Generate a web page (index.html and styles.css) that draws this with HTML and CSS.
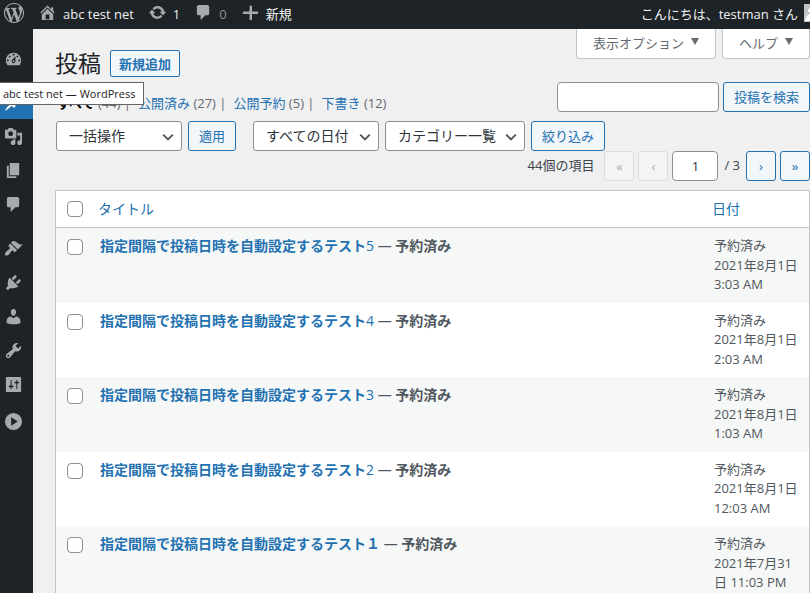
FILE: index.html
```html
<!DOCTYPE html>
<html lang="ja">
<head>
  <meta charset="UTF-8" />
  <meta name="viewport" content="width=device-width, initial-scale=1.0" />
  <title>投稿 ‹ abc test net — WordPress</title>
  <link rel="stylesheet" href="styles.css">
</head>
<body>
  <header class="adminbar">
    <a class="bar-item bar-logo" href="#" aria-label="WordPress">
      <svg class="icon-logo" viewBox="0 0 20 20"><path d="M20 10c0-5.51-4.49-10-10-10C4.48 0 0 4.49 0 10c0 5.52 4.48 10 10 10 5.51 0 10-4.48 10-10zM7.78 15.37L4.37 6.22c.55-.02 1.17-.08 1.17-.08.5-.06.44-1.13-.06-1.11 0 0-1.45.11-2.37.11-.18 0-.37 0-.58-.01C4.12 2.69 6.87 1.11 10 1.11c2.33 0 4.45.87 6.05 2.34-.68-.11-1.65.39-1.65 1.58 0 .74.45 1.36.9 2.1.35.61.55 1.36.55 2.46 0 1.49-1.4 5-1.4 5l-3.03-8.37c.54-.02.82-.17.82-.17.5-.05.44-1.25-.06-1.22 0 0-1.44.12-2.38.12-.87 0-2.33-.12-2.33-.12-.5-.03-.56 1.2-.06 1.22l.92.08 1.26 3.41zM17.41 10c.24-.64.74-1.87.43-4.25.7 1.29 1.05 2.71 1.05 4.25 0 3.29-1.73 6.24-4.4 7.78.97-2.59 1.94-5.2 2.92-7.78zM6.1 18.09C3.12 16.65 1.11 13.53 1.11 10c0-1.3.23-2.48.72-3.59C3.25 10.3 4.67 14.2 6.1 18.09zm4.03-6.63l2.58 6.98c-.86.29-1.76.45-2.71.45-.79 0-1.57-.11-2.29-.33.81-2.38 1.62-4.74 2.42-7.1z"/></svg>
    </a>
    <a class="bar-item" href="#">
      <svg viewBox="0 0 20 20"><path d="M16 8.5l1.53 1.53-1.06 1.06L10 4.6l-6.47 6.49-1.06-1.06L10 2.5l4 4v-2h2v4zm-6-2.46l6 5.99V18H4v-5.97zM12 17v-5H8v5h4z"/></svg>
      abc test net
    </a>
    <a class="bar-item" href="#">
      <svg viewBox="0 0 20 20"><path d="M10.2 3.28c3.53 0 6.43 2.61 6.92 6h2.08l-3.5 4-3.5-4h2.32c-.45-1.97-2.21-3.45-4.32-3.45-1.45 0-2.73.71-3.54 1.78L4.95 5.66C6.23 4.2 8.11 3.28 10.2 3.28zm-.4 13.44c-3.52 0-6.43-2.61-6.92-6H.8l3.5-4c1.17 1.33 2.33 2.67 3.5 4H5.48c.45 1.97 2.21 3.45 4.32 3.45 1.45 0 2.73-.71 3.54-1.78l1.71 1.95c-1.28 1.46-3.15 2.38-5.25 2.38z"/></svg>
      1
    </a>
    <a class="bar-item muted" href="#">
      <svg viewBox="0 0 20 20"><path d="M5 2h9c1.1 0 2 .9 2 2v7c0 1.1-.9 2-2 2h-2l-5 5v-5H5c-1.1 0-2-.9-2-2V4c0-1.1.9-2 2-2z"/></svg>
      0
    </a>
    <a class="bar-item" href="#">
      <svg viewBox="0 0 20 20"><path d="M9 3h2.600v6H18v2.600h-6.400V18H9v-6.400H2V9h7z"/></svg>
      新規
    </a>
    <a class="bar-item bar-user" href="#">
      こんにちは、testman さん
      <svg class="avatar" viewBox="0 0 6 18"><path fill="#c3c4c7" d="M0 0h6v18H0z"/><path fill="#fff" d="M6 4v4H4c0-2 .6-3.200 2-4zM6 9.500V17H1c.3-3.500 2-6 5-7.500z"/></svg>
    </a>
  </header>

  <div class="layout">
    <nav class="menu">
      <a href="#" aria-label="ダッシュボード"><svg viewBox="0 0 20 20"><path fill-rule="evenodd" d="M3.76 17h12.48c1.1-1.37 1.76-3.11 1.76-5 0-4.42-3.58-8-8-8s-8 3.58-8 8c0 1.89.66 3.63 1.76 5zM10 5c.55 0 1 .45 1 1s-.45 1-1 1-1-.45-1-1 .45-1 1-1zM6 7c.55 0 1 .45 1 1s-.45 1-1 1-1-.45-1-1 .45-1 1-1zm8 0c.55 0 1 .45 1 1s-.45 1-1 1-1-.45-1-1 .45-1 1-1zM8.600 11.500L12 7.500v5.500c0 1.100-.9 2-2 2s-2-.9-2-2c0-.57.24-1.100.6-1.500zM4 11c.55 0 1 .45 1 1s-.45 1-1 1-1-.45-1-1 .45-1 1-1zm12 0c.55 0 1 .45 1 1s-.45 1-1 1-1-.45-1-1 .45-1 1-1zm-5 2c0-.55-.45-1-1-1s-1 .45-1 1 .45 1 1 1 1-.45 1-1z"/></svg></a>
      <a class="current group" href="#" aria-label="投稿"><svg viewBox="0 0 20 20"><path d="M10.44 3.02l1.82-1.82 6.36 6.35-1.83 1.82c-1.05-.68-2.48-.57-3.41.36l-.75.75c-.92.93-1.04 2.35-.35 3.41l-1.83 1.82-2.41-2.41-2.8 2.79c-.42.42-3.38 2.71-3.8 2.29s1.86-3.39 2.28-3.81l2.79-2.79L4.1 9.36l1.83-1.82c1.05.69 2.48.57 3.4-.36l.75-.75c.93-.92 1.05-2.35.36-3.41z"/></svg></a>
      <a href="#" aria-label="メディア"><svg viewBox="0 0 20 20"><path fill-rule="evenodd" d="M13 11V4c0-.55-.45-1-1-1h-1.67L9 1H5L3.67 3H2c-.55 0-1 .45-1 1v7c0 .55.45 1 1 1h10c.55 0 1-.45 1-1zM7 4.500c1.38 0 2.500 1.120 2.500 2.500S8.38 9.500 7 9.500 4.500 8.38 4.500 7 5.620 4.500 7 4.500zM14 6h5v10.500c0 1.380-1.120 2.500-2.500 2.500S14 17.880 14 16.500s1.120-2.500 2.500-2.500c.17 0 .34.02.5.05V9h-3V6zm-4 8.050V13h2v3.500c0 1.380-1.120 2.500-2.500 2.500S7 17.880 7 16.500 8.120 14 9.500 14c.17 0 .34.02.5.05z"/></svg></a>
      <a href="#" aria-label="固定ページ"><svg viewBox="0 0 20 20"><path d="M6 15V2h10v13H6zm-1 1h8v2H3V5h2v11z"/></svg></a>
      <a href="#" aria-label="コメント"><svg viewBox="0 0 20 20"><path d="M5 2h9c1.1 0 2 .9 2 2v7c0 1.1-.9 2-2 2h-2l-5 5v-5H5c-1.1 0-2-.9-2-2V4c0-1.1.9-2 2-2z"/></svg></a>
      <a class="group" href="#" aria-label="外観"><svg viewBox="0 0 20 20"><path d="M14.48 11.06L7.41 3.99l1.5-1.5c.5-.56 2.3-.47 3.51.32 1.21.8 1.43 1.28 2.91 2.1 1.18.64 2.45 1.26 4.45.85zm-.71.71L6.7 4.7 4.93 6.47c-.39.39-.39 1.02 0 1.41l1.06 1.06c.39.39.39 1.03 0 1.42-.6.6-1.43 1.11-2.21 1.69-.35.26-.7.53-1.01.84C1.43 14.23.4 16.08 1.4 17.07c.99 1 2.84-.03 4.18-1.36.31-.31.58-.66.85-1.02.57-.78 1.08-1.61 1.69-2.21.39-.39 1.02-.39 1.41 0l1.06 1.06c.39.39 1.02.39 1.41 0z"/></svg></a>
      <a href="#" aria-label="プラグイン"><svg viewBox="0 0 20 20"><path d="M13.11 4.36L9.87 7.6 8 5.73l3.24-3.24c.35-.34 1.05-.2 1.56.32.52.51.66 1.21.31 1.55zm-8 1.77l.91-1.12 9.01 9.01-1.19.84c-.71.71-2.63 1.16-3.82 1.16H6.14L4.9 17.26c-.59.59-1.54.59-2.12 0-.59-.58-.59-1.53 0-2.12l1.24-1.24v-3.88c0-1.13.4-3.19 1.09-3.89zm7.26 3.97l3.24-3.24c.34-.35 1.04-.21 1.55.31.52.51.66 1.21.31 1.55l-3.24 3.25z"/></svg></a>
      <a href="#" aria-label="ユーザー"><svg viewBox="0 0 20 20"><path d="M10 9.25c-2.27 0-2.73-3.44-2.73-3.44C7 4.02 7.82 2 9.97 2c2.16 0 2.98 2.02 2.71 3.81 0 0-.41 3.44-2.68 3.44zm0 2.57L12.72 10c2.39 0 4.52 2.33 4.52 4.53v2.49s-3.65 1.13-7.24 1.13c-3.65 0-7.24-1.13-7.24-1.13v-2.49c0-2.25 1.94-4.48 4.47-4.48z"/></svg></a>
      <a href="#" aria-label="ツール"><svg viewBox="0 0 20 20"><path fill-rule="evenodd" d="M16.68 9.77c-1.34 1.34-3.3 1.67-4.95.99l-5.41 6.52c-.99.99-2.59.99-3.58 0s-.99-2.59 0-3.57l6.52-5.42c-.68-1.65-.35-3.61.99-4.95 1.28-1.28 3.12-1.62 4.72-1.06l-2.89 2.89 2.82 2.82 2.86-2.87c.53 1.58.18 3.39-1.08 4.65zM3.81 16.21c.4.39 1.04.39 1.43 0 .4-.4.4-1.04 0-1.43-.39-.4-1.03-.4-1.43 0-.39.39-.39 1.03 0 1.43z"/></svg></a>
      <a href="#" aria-label="設定"><svg viewBox="0 0 20 20"><path fill-rule="evenodd" d="M18 17V3c0-.6-.4-1-1-1H3c-.6 0-1 .4-1 1v14c0 .6.4 1 1 1h14c.6 0 1-.4 1-1zM8 11h1c.55 0 1 .45 1 1s-.45 1-1 1H8v1.500c0 .28-.22.5-.5.5s-.5-.22-.5-.5V13H6c-.55 0-1-.45-1-1s.45-1 1-1h1V5.500c0-.28.22-.5.5-.5s.5.22.5.5V11zm5-2h-1c-.55 0-1-.45-1-1s.45-1 1-1h1V5.500c0-.28.22-.5.5-.5s.5.22.5.5V7h1c.55 0 1 .45 1 1s-.45 1-1 1h-1v5.500c0 .28-.22.5-.5.5s-.5-.22-.5-.5V9z"/></svg></a>
      <button class="collapse" type="button" aria-label="メニューを開く"><svg viewBox="0 0 20 20"><path fill-rule="evenodd" d="M10 1a9 9 0 1 1 0 18a9 9 0 1 1 0-18zM7.500 5.500v9l7-4.500z"/></svg></button>
    </nav>

    <main class="content">
      <div class="page-head">
        <div class="heading">
          <h1>投稿</h1>
          <a class="button add-new" href="#">新規追加</a>
        </div>
        <div class="screen-tabs">
          <button type="button">表示オプション <span class="caret"></span></button>
          <button type="button">ヘルプ <span class="caret"></span></button>
        </div>
      </div>

      <div class="views-row">
        <ul class="views">
          <li><a class="active" href="#">すべて</a> (44) |</li>
          <li><a href="#">公開済み</a> (27) |</li>
          <li><a href="#">公開予約</a> (5) |</li>
          <li><a href="#">下書き</a> (12)</li>
        </ul>
        <form class="search">
          <input type="search" aria-label="投稿を検索">
          <button class="button" type="button">投稿を検索</button>
        </form>
      </div>

      <div class="filters">
        <div class="filter-group">
          <select class="select-short" aria-label="一括操作を選択"><option>一括操作</option></select>
          <button class="button" type="button">適用</button>
        </div>
        <div class="filter-group">
          <select class="select-short" aria-label="日付で絞り込む"><option>すべての日付</option></select>
          <select class="select-long" aria-label="カテゴリーで絞り込む"><option>カテゴリー一覧</option></select>
          <button class="button" type="button">絞り込み</button>
        </div>
      </div>

      <div class="pagination">
        <span class="count">44個の項目</span>
        <button class="button page-button" type="button" disabled>«</button>
        <button class="button page-button" type="button" disabled>‹</button>
        <input class="page-input" type="text" value="1" aria-label="現在のページ">
        <span class="total">/ 3</span>
        <button class="button page-button" type="button">›</button>
        <button class="button page-button" type="button">»</button>
      </div>

      <table class="posts">
        <thead>
          <tr>
            <th class="check"><input type="checkbox" aria-label="すべて選択"></th>
            <th><a href="#">タイトル</a></th>
            <th class="date"><a href="#">日付</a></th>
          </tr>
        </thead>
        <tbody>
          <tr>
            <td class="check"><input type="checkbox" aria-label="テスト5を選択"></td>
            <td class="title"><a href="#">指定間隔で投稿日時を自動設定するテスト<span class="num">5</span></a> — <strong>予約済み</strong></td>
            <td class="date">予約済み<br>2021年8月1日 3:03 AM</td>
          </tr>
          <tr>
            <td class="check"><input type="checkbox" aria-label="テスト4を選択"></td>
            <td class="title"><a href="#">指定間隔で投稿日時を自動設定するテスト<span class="num">4</span></a> — <strong>予約済み</strong></td>
            <td class="date">予約済み<br>2021年8月1日 2:03 AM</td>
          </tr>
          <tr>
            <td class="check"><input type="checkbox" aria-label="テスト3を選択"></td>
            <td class="title"><a href="#">指定間隔で投稿日時を自動設定するテスト<span class="num">3</span></a> — <strong>予約済み</strong></td>
            <td class="date">予約済み<br>2021年8月1日 1:03 AM</td>
          </tr>
          <tr>
            <td class="check"><input type="checkbox" aria-label="テスト2を選択"></td>
            <td class="title"><a href="#">指定間隔で投稿日時を自動設定するテスト<span class="num">2</span></a> — <strong>予約済み</strong></td>
            <td class="date">予約済み<br>2021年8月1日 12:03 AM</td>
          </tr>
          <tr>
            <td class="check"><input type="checkbox" aria-label="テスト１を選択"></td>
            <td class="title"><a href="#">指定間隔で投稿日時を自動設定するテスト１</a> — <strong>予約済み</strong></td>
            <td class="date">予約済み<br>2021年7月31日 11:03 PM</td>
          </tr>
        </tbody>
      </table>
    </main>
  </div>

  <div class="tooltip" role="tooltip">abc test net — WordPress</div>
</body>
</html>
```
FILE: styles.css
```css
* {
  box-sizing: border-box;
}
body {
  margin: 0;
  height: 100vh;
  overflow: hidden;
  display: flex;
  flex-direction: column;
  background: #f0f0f1;
  color: #3c434a;
  font-family: "Open Sans", "Noto Sans CJK JP", sans-serif;
  font-size: 13px;
  line-height: 1.5;
}
a {
  color: #2271b1;
  text-decoration: none;
}
button, input, select {
  font: inherit;
}
svg {
  display: block;
  flex: none;
  width: 20px;
  height: 20px;
  fill: #a7aaad;
}

/* admin bar */
.adminbar {
  flex: none;
  display: flex;
  align-items: center;
  gap: 14px;
  height: 29px;
  padding-left: 4px;
  background: #1d2327;
  overflow: hidden;
}
.bar-item {
  display: flex;
  align-items: center;
  gap: 6px;
  color: #f0f0f1;
  font-size: 13px;
  white-space: nowrap;
}
.bar-item svg {
  width: 19px;
  height: 19px;
  margin-bottom: 4px;
}
.bar-item .icon-logo {
  width: 20px;
  height: 20px;
}
.muted {
  color: #8c8f94;
}
.bar-user {
  margin-left: auto;
}
.bar-item .avatar {
  width: 6px;
  height: 18px;
}

/* side menu */
.layout {
  flex: 1;
  display: flex;
  min-height: 0;
}
.menu {
  flex: none;
  width: 33px;
  padding-top: 12px;
  background: #1d2327;
}
.menu a, .collapse {
  display: flex;
  align-items: center;
  width: 100%;
  height: 34px;
  padding: 0 0 0 4px;
}
.menu .group {
  margin-top: 10px;
}
.menu .current {
  background: #2271b1;
}
.current svg {
  fill: #fff;
}
.collapse {
  margin-top: 3px;
  border: 0;
  background: none;
}
.menu svg {
  width: 19px;
  height: 19px;
}

/* page head */
.content {
  flex: 1;
  min-width: 0;
  padding-left: 22px;
}
.page-head {
  display: flex;
  justify-content: space-between;
  align-items: flex-start;
}
.heading {
  display: flex;
  align-items: center;
  gap: 9px;
  padding-top: 21px;
}
h1 {
  margin: 0;
  color: #1d2327;
  font-size: 23px;
  font-weight: 400;
  line-height: 27px;
}
.button {
  height: 30px;
  padding: 0 10px;
  border: 1px solid #2271b1;
  border-radius: 3px;
  background: #f3f7f9;
  color: #2271b1;
  line-height: 28px;
  white-space: nowrap;
}
.add-new {
  height: 27px;
  padding: 0 8px;
  border-radius: 2px;
  font-weight: 600;
  line-height: 26px;
}
.screen-tabs {
  display: flex;
  gap: 6px;
}
.screen-tabs button {
  display: flex;
  align-items: center;
  gap: 7px;
  height: 30px;
  padding: 0 16px;
  border: 1px solid #c3c4c7;
  border-top: 0;
  border-radius: 0 0 4px 4px;
  background: #fff;
  color: #646970;
}
.caret {
  margin-bottom: 4px;
  border: 4px solid transparent;
  border-top: 7px solid #646970;
  border-bottom: 0;
}

/* views and search */
.views-row {
  display: flex;
  justify-content: space-between;
  align-items: flex-end;
  margin-top: 5px;
}
.views {
  display: flex;
  gap: 7px;
  margin: 0;
  padding: 0 0 0 2px;
  color: #646970;
  line-height: 18px;
  list-style: none;
}
.views .active {
  color: #000;
  font-weight: 600;
}
.search {
  display: flex;
  gap: 4px;
}
.search input {
  width: 162px;
  height: 30px;
  border: 1px solid #8c8f94;
  border-radius: 4px;
  background: #fff;
}

/* filters */
.filters {
  display: flex;
  gap: 17px;
  margin-top: 9px;
  padding-left: 1px;
}
.filter-group {
  display: flex;
  gap: 6px;
}
select {
  height: 30px;
  padding: 0 24px 2px 12px;
  border: 1px solid #8c8f94;
  border-radius: 3px;
  appearance: none;
  background: #fff url("data:image/svg+xml,%3Csvg xmlns='http://www.w3.org/2000/svg' viewBox='0 0 20 20'%3E%3Cpath d='M4 7l6 6 6-6' fill='none' stroke='%23555' stroke-width='2.400'/%3E%3C/svg%3E") no-repeat right 5px top 7px / 16px 16px;
  color: #2c3338;
  font-size: 14px;
}
.select-short {
  width: 126px;
}
.select-long {
  width: 140px;
}

/* pagination */
.pagination {
  display: flex;
  justify-content: flex-end;
  align-items: center;
  gap: 4px;
}
.count {
  margin-right: 6px;
}
.page-button {
  width: 30px;
  padding: 0;
}
.page-button:disabled {
  border-color: #dcdcde;
  background: #f3f4f4;
  color: #a7aaad;
}
.page-input {
  width: 46px;
  height: 30px;
  border: 1px solid #8c8f94;
  border-radius: 4px;
  background: #fff;
  color: #2c3338;
  text-align: center;
}
.total {
  padding: 0 2px;
}

/* post list */
.posts {
  width: 100%;
  margin-top: 9px;
  border: 1px solid #c3c4c7;
  border-spacing: 0;
  background: #fff;
  table-layout: fixed;
}
th {
  height: 37px;
  padding: 0 8px 2px;
  border-bottom: 1px solid #c3c4c7;
  font-size: 14px;
  font-weight: 400;
  text-align: left;
}
td {
  padding: 8px 10px;
  color: #50575e;
  vertical-align: top;
}
tbody tr:nth-child(odd) {
  background: #f6f7f7;
}
.check {
  width: 34px;
  padding-left: 11px;
  padding-right: 0;
}
.check input {
  display: block;
  width: 16px;
  height: 16px;
  margin: 0;
  border: 1px solid #8c8f94;
  border-radius: 4px;
  appearance: none;
  background: #fff;
}
th.check {
  padding-bottom: 0;
}
td.check {
  padding-top: 11px;
}
.date {
  width: 105px;
}
.title {
  padding-top: 7px;
  font-size: 14px;
}
.title a {
  font-weight: 600;
}
.title .num {
  font-weight: 400;
}

/* browser tooltip over the menu */
.tooltip {
  position: absolute;
  top: 82px;
  left: 0;
  padding: 0 8px 0 3px;
  border: 1px solid #646464;
  border-left: 0;
  background: #fff;
  color: #222;
  font-size: 11px;
  line-height: 21px;
}
```
